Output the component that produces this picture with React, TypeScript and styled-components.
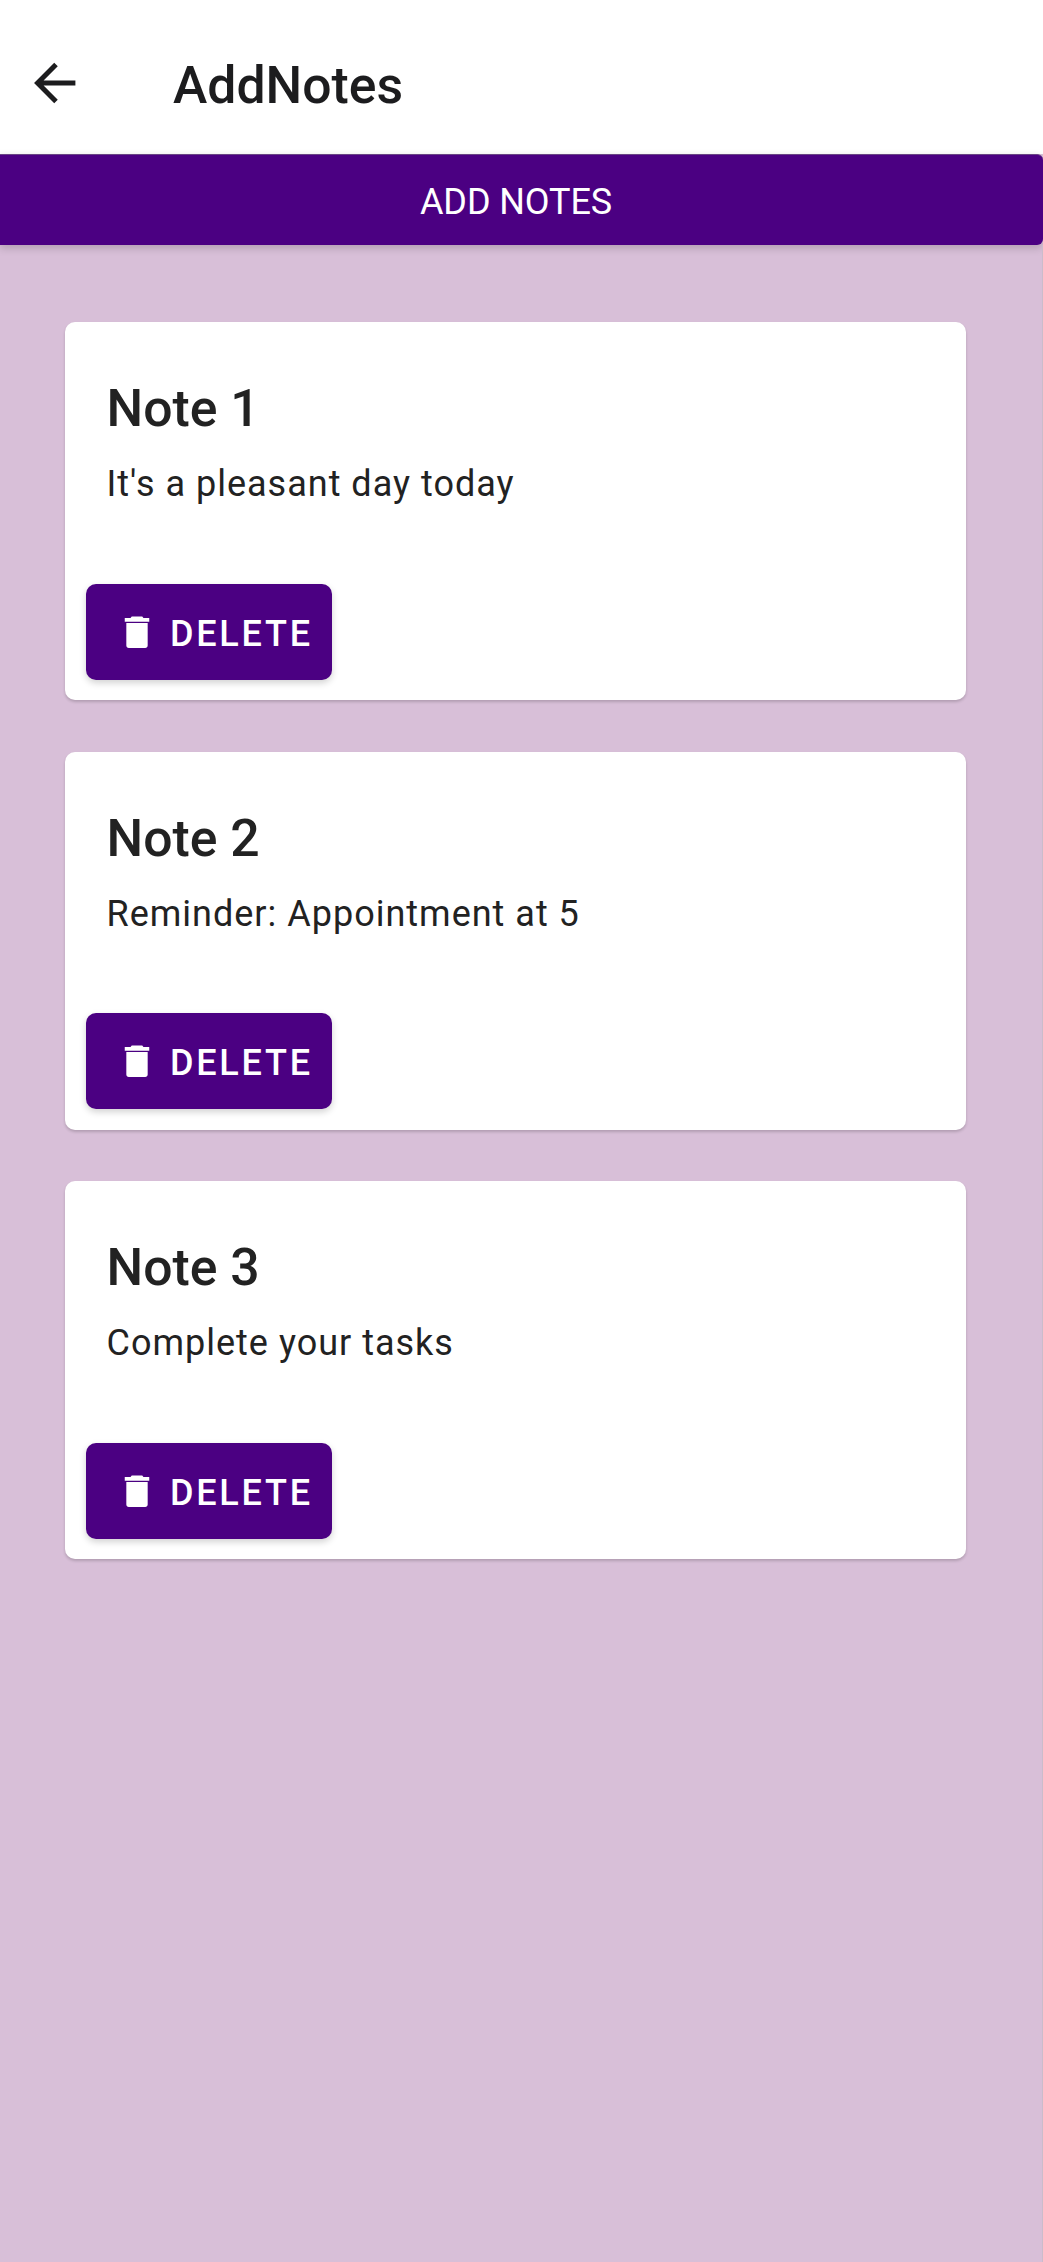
import React from "react";
import styled, { createGlobalStyle } from "styled-components";

const GlobalStyle = createGlobalStyle`
  * { box-sizing: border-box; }
  body { margin: 0; background: #d8bfd8; font-family: Roboto, "Liberation Sans", sans-serif; }
`;

const Screen = styled.div`
  min-height: 2262px;
  width: 100%;
  display: flex;
  flex-direction: column;
  background: #d8bfd8;
`;

const AppBar = styled.header`
  height: 154px;
  padding: 13px 0 0 30.3px;
  display: flex;
  align-items: center;
  background: #fff;
  color: #1c1c1e;
`;

const BackButton = styled.button`
  display: flex;
  width: 142.7px;
  margin-top: -2px;
  padding: 0;
  border: 0;
  background: none;
  color: inherit;
`;

const ScreenTitle = styled.h1`
  margin: 4px 0 0;
  font-size: 51.7px;
  line-height: 62px;
  font-weight: 500;
`;

const AddButton = styled.button`
  height: 91px;
  padding: 4px 11px 0 0;
  border: 0;
  border-top: 1px solid #6a4585;
  border-radius: 0 6px 6px 0;
  background: #4b0082;
  color: #fff;
  font: 400 36px/44px Roboto, sans-serif;
  letter-spacing: -0.1px;
  box-shadow: 0 3px 8px rgba(0, 0, 0, 0.18);
`;

const NoteList = styled.main`
  flex: 1;
  padding: 77px 76px 0 65px;
  display: flex;
  flex-direction: column;
  gap: 51.5px;
  border-right: 1px solid #cbbccb;
`;

const Card = styled.article`
  height: 378px;
  padding: 53px 20.5px 20.5px;
  display: flex;
  flex-direction: column;
  align-items: flex-start;
  border-radius: 10px;
  background: #fff;
  color: #222;
  box-shadow: 0 2px 3px rgba(0, 0, 0, 0.18);
`;

const NoteTitle = styled.h2`
  margin: 0 21px;
  font-size: 51.7px;
  line-height: 68px;
  font-weight: 500;
`;

const NoteBody = styled.p`
  margin: 15px 21px auto;
  font-size: 36px;
  line-height: 52px;
  letter-spacing: 1px;
`;

const DeleteButton = styled.button`
  width: 246.5px;
  height: 96px;
  padding: 2px 0 0 30px;
  display: flex;
  align-items: center;
  gap: 12.5px;
  border: 0;
  border-radius: 10px;
  background: #4b0082;
  color: #fff;
  font: 500 36px/44px Roboto, sans-serif;
  letter-spacing: 2.75px;
  box-shadow: 0 3px 7px rgba(0, 0, 0, 0.18);
`;

const DeleteLabel = styled.span`
  padding-top: 2px;
`;

const TrashGlyph = styled.svg`
  width: 42px;
  height: 42px;
  margin-bottom: 2px;
`;

const BackIcon = () => (
  <svg width="48" height="48" viewBox="0 0 48 48" fill="none" stroke="currentColor" strokeWidth="5">
    <path d="M45.4 24H7M26 5.6 7.6 24 26 42.4" />
  </svg>
);

const TrashIcon = () => (
  <TrashGlyph viewBox="0 0 24 24" fill="currentColor">
    <path d="M5.9 19.7c0 .8.6 1.4 1.4 1.4h9.4c.8 0 1.4-.6 1.4-1.4V6.9H5.9v12.8zM19 4h-3.3l-.7-.9H9L8.300 4H5v2.200h14V4z" />
  </TrashGlyph>
);

const notes = [
  { title: "Note 1", body: "It's a pleasant day today" },
  { title: "Note 2", body: "Reminder: Appointment at 5" },
  { title: "Note 3", body: "Complete your tasks" },
];

export default function App() {
  return (
    <>
      <GlobalStyle />
      <Screen>
        <AppBar>
          <BackButton aria-label="Back">
            <BackIcon />
          </BackButton>
          <ScreenTitle>AddNotes</ScreenTitle>
        </AppBar>
        <AddButton>ADD NOTES</AddButton>
        <NoteList>
          {notes.map((note) => (
            <Card key={note.title}>
              <NoteTitle>{note.title}</NoteTitle>
              <NoteBody>{note.body}</NoteBody>
              <DeleteButton>
                <TrashIcon />
                <DeleteLabel>DELETE</DeleteLabel>
              </DeleteButton>
            </Card>
          ))}
        </NoteList>
      </Screen>
    </>
  );
}
